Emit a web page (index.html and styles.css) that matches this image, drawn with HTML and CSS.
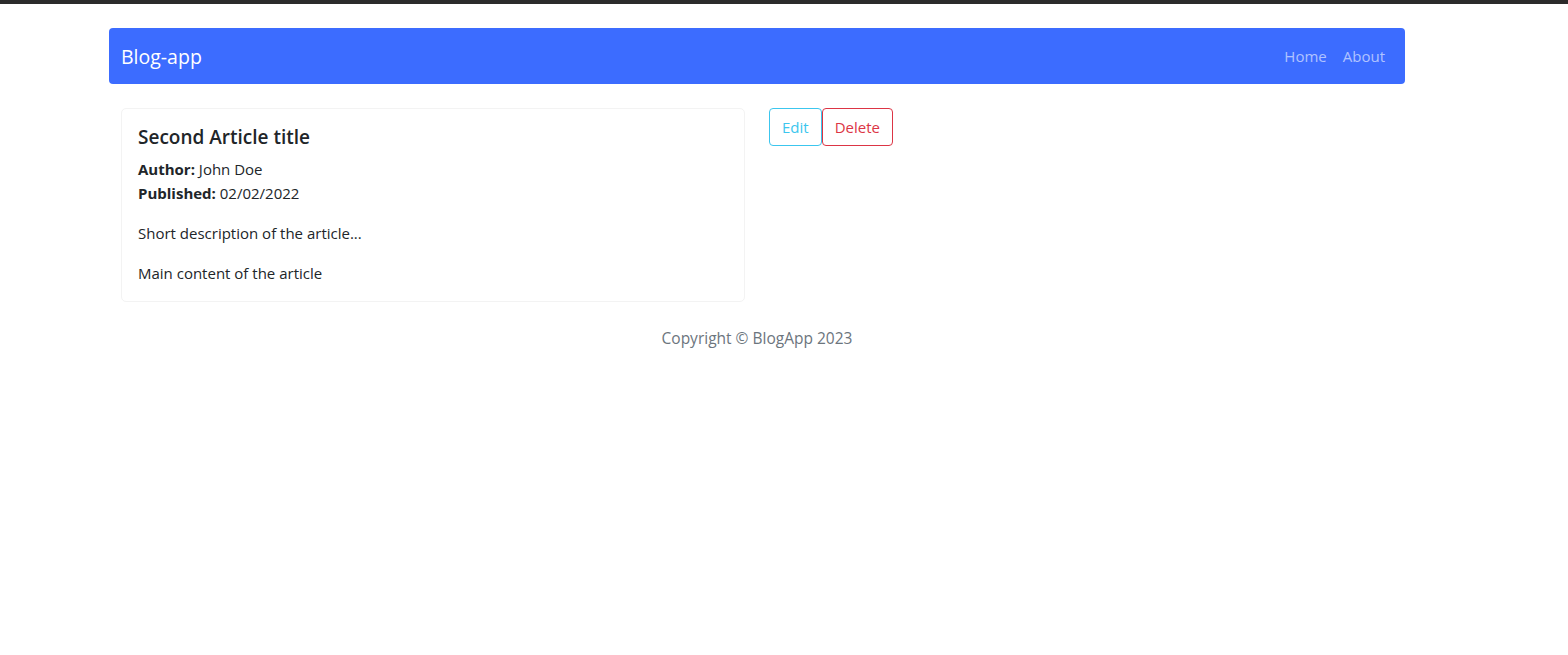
FILE: index.html
```html
<!DOCTYPE html>
<html lang="en">
<head>
<meta charset="utf-8">
<title>Blog-app</title>
<link rel="stylesheet" href="styles.css">
</head>
<body>
<div class="topbar"></div>
<div class="page">
  <nav class="navbar">
    <a class="brand" href="#">Blog-app</a>
    <div class="nav-links">
      <a class="nav-link" href="#">Home</a>
      <a class="nav-link" href="#">About</a>
    </div>
  </nav>
  <main class="content">
    <article class="card">
      <h5 class="card-title">Second Article title</h5>
      <div class="meta"><b>Author:</b> John Doe</div>
      <div class="meta"><b>Published:</b> 02/02/2022</div>
      <p class="text">Short description of the article...</p>
      <p class="text last">Main content of the article</p>
    </article>
    <div class="actions">
      <button class="btn btn-info">Edit</button>
      <button class="btn btn-danger">Delete</button>
    </div>
  </main>
  <footer class="footer">Copyright © BlogApp 2023</footer>
</div>
</body>
</html>
```
FILE: styles.css
```css
* { box-sizing: border-box; }
html, body { margin: 0; padding: 0; }
body {
  font-family: "Open Sans", "Noto Sans", "Liberation Sans", sans-serif;
  font-size: 15px;
  line-height: 24px;
  color: #212529;
  background: #fff;
}
.topbar { height: 4px; background: #2b2b2b; }
.page { width: 1296px; margin-left: 109px; padding-top: 24px; }
.navbar {
  height: 56px;
  background: #3c6cff;
  border-radius: 4px;
  display: flex;
  align-items: center;
  justify-content: space-between;
  padding: 0 12px;
}
.brand { color: #fff; text-decoration: none; font-size: 19.5px; line-height: 30px; padding-top: 2px; }
.nav-links { display: flex; }
.nav-link { color: rgba(255,255,255,0.6); text-decoration: none; padding: 0 8px; }
.content { display: flex; align-items: flex-start; gap: 24px; padding: 24px 12px 0; }
.card {
  width: 624px;
  border: 1px solid #f3f3f3;
  border-radius: 5px;
  padding: 16px;
}
.card-title { margin: 0 0 8px; padding-top: 1px; font-size: 19px; font-weight: 600; line-height: 23px; }
.meta b { font-weight: 700; }
.text { margin: 16px 0 0; }
.actions { display: flex; }
.btn {
  font-family: inherit;
  font-size: 15px;
  line-height: 24px;
  padding: 6px 12px;
  background: #fff;
  border: 1px solid;
  border-radius: 4px;
  cursor: pointer;
}
.btn-info { color: #3cc6ee; border-color: #3cc6ee; }
.btn-danger { color: #dc3545; border-color: #dc3545; }
.footer { text-align: center; color: #6c757d; padding-top: 24px; line-height: 24px; font-size: 15.5px; }
```
